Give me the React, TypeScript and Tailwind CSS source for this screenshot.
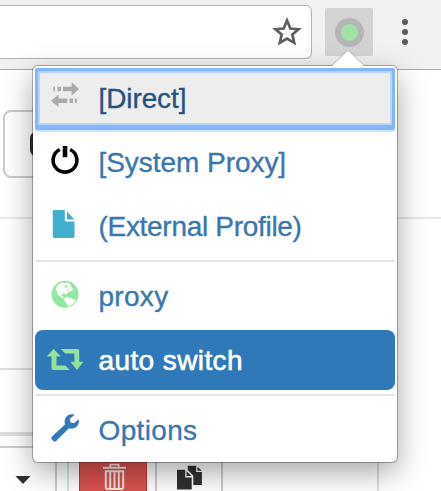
import React from "react";

const icon = "block h-7 w-7 shrink-0 overflow-visible";

function TransferIcon() {
  return (
    <svg className={`${icon} -translate-y-1`} viewBox="0 0 28 28" fill="#aaaaaa">
      <path d="M12 6.7h8.7V2.3L28 9l-7.3 6.4v-4.1H12zM6.5 6.7H10v4.6H6.5zM2.3 6.7H4v4.6H2.3z" />
      <path d="M16.3 18.4H7.5v-4L0 20.7 7.5 27v-4h8.8zM18.5 18.4H22V23h-3.5zM23.9 18.4h1.9V23h-1.9z" />
    </svg>
  );
}

function PowerIcon() {
  return (
    <svg className={`${icon} -translate-y-0.5`} viewBox="0 0 28 28" fill="none" stroke="#000">
      <path d="M8.8 3.5a11.9 11.9 0 1 0 10.4 0" strokeWidth="3.6" />
      <path d="M14 0v11.2" strokeWidth="4.6" />
    </svg>
  );
}

function FileIcon() {
  return (
    <svg className={`${icon} -translate-y-0.5`} viewBox="0 0 28 28" fill="#41afcd">
      <path d="M3.2 0h10.6v9.8q0 1.6 1.6 1.6h8.1v15.2q0 1.4-1.4 1.4H3.2q-1.4 0-1.4-1.4V1.4Q1.8 0 3.2 0z" />
      <path d="M16 1.4l7.4 8H16z" />
    </svg>
  );
}

function GlobeIcon() {
  return (
    <svg className={`${icon} -translate-y-0.5`} viewBox="0 0 28 28">
      <circle cx="14" cy="14.3" r="13.5" fill="#94e7a0" />
      <path
        fill="#fff"
        d="M6.4 5.2l2.9-2 2.4-.7 2.5.7 1.4-.9 2.9.6.6 1.6 1.6 1.2-.3 2 1.4 1.1-.6 2.1-2.6.5-2.2 1.1-.3 1.6-1.7.4-1.2-1.2-2.1.9-.6 1.6 1.2 1 1.2.3.2 1.4-1.5-.2-2-1.7-2-.9-1.4-2.2-.4-2.8-.9-1.4.6-2.2z"
      />
      <path fill="#fff" d="M13.5 18.1l2.4-1 2.2.7 2.3.2 2.1 1.4 2.2.3-.8 2-1.9 2.2-2.6 1.7-2.6 1.2-.5-2.6-1.9-1.9-1.2-2.2z" />
      <path fill="#94e7a0" d="M13.3 5.9l2-.9 1.4 1.3-.8 1.4-1.8-.5zM16 9.1l1.8-.3.3 1.1-1.6.4z" />
    </svg>
  );
}

function RetweetIcon() {
  return (
    <svg className={icon} viewBox="0 0 28 28" fill="#94e39d">
      <path d="M2.6 2.9l7.1 7.7H5.5v9h8.7l4.6 4.3H2.4q-1.9 0-1.9-1.9V10.6h-4.8z" />
      <path d="M9.9 2.9h16.4q1.9 0 1.9 1.9v11h4.1L26 23.9l-6.6-8.1h4V7.6h-9z" />
    </svg>
  );
}

function WrenchIcon() {
  return (
    <svg className={`${icon} -translate-y-0.5`} viewBox="0 0 28 28" fill="#307ab8">
      <path d="M23.6.8c-2.8-1-6-.5-8.1 1.7-2 2.1-2.5 5.1-1.3 7.8L.8 22.8q-1.3 1.3 0 2.6l1.7 1.7q1.3 1.2 2.6 0L17.9 14.2c2.6 1 5.7.4 7.7-1.6 2-1.9 2.8-4.7 2.1-7.3l-4.8 4-3.3-.8-.9-3.5z" />
    </svg>
  );
}

function StarIcon() {
  return (
    <svg className="block h-7 w-[30px] overflow-visible" viewBox="0 0 30 28" fill="none" stroke="#5e5e5e" strokeWidth="2.7">
      <path d="M15 2.6l3.3 7.9 8.3.7-6.3 5.4 1.9 8.2-7.2-4.3-7.2 4.3 1.9-8.2-6.3-5.4 8.3-.7z" />
    </svg>
  );
}

function TrashIcon() {
  return (
    <svg className="block h-7 w-[23px]" viewBox="0 0 23 28" fill="none" stroke="#f4e5e4">
      <path d="M0 4.8h23" strokeWidth="1.9" />
      <path d="M7.3 4.2V1.7h8.4v2.5" strokeWidth="1.7" />
      <path d="M2.8 8.3h17.4v15.8q0 2-2 2H4.8q-2 0-2-2z" strokeWidth="2" />
      <path d="M7.2 9v17M11.5 9v17M15.8 9v17" strokeWidth="1.9" />
    </svg>
  );
}

function DuplicateIcon() {
  return (
    <svg className="block h-[26px] w-[26px]" viewBox="0 0 26 26" fill="#303030">
      <path d="M0 4.8h8.2v7.6h6.5V24.5H0zM9.6 6.2l4.9 4.9H9.6zM10.7.7h8.5v6.2h5.7v13h-8.6v-9.3L10.7 5zM20.5 1.7l4.3 4.1h-4.3z" />
    </svg>
  );
}

interface ItemProps {
  label: string;
  children: React.ReactNode;
  tracking?: string;
  state?: "normal" | "focused" | "active";
}

function Item({ label, children, tracking = "", state = "normal" }: ItemProps) {
  const look =
    state === "active"
      ? "rounded-lg bg-[#2f79b9] text-white [-webkit-text-stroke:0.6px_white]"
      : state === "focused"
        ? "bg-[#ededed] text-[#28527c] [-webkit-text-stroke:0.35px_#28527c]"
        : "text-[#3a76b0] [-webkit-text-stroke:0.35px_#3a76b0]";
  return (
    <li className={`relative flex h-[60px] items-center gap-[19.5px] pl-4 text-[28px] leading-none ${look}`}>
      {children}
      <span className={`whitespace-nowrap pt-px ${tracking}`}>{label}</span>
      {state === "focused" && (
        <span className="absolute -bottom-0.5 left-0 right-0 top-0 rounded-xs border-3 border-b-5 border-[#82b7fa] shadow-[inset_0_0_0_2px_#b8d5f8,0_2px_0_#cfe4fc]" />
      )}
    </li>
  );
}

function Divider() {
  return <li className="h-0.5 shrink-0 bg-[#e4e4e4]" />;
}

function Toolbar() {
  return (
    <header className="flex h-[70px] items-start border-b border-[#a9a9a9] bg-[#f1f1f1]">
      <div className="mt-[5px] flex h-[54px] w-[312px] items-center justify-end rounded-r-md border border-l-0 border-[#b2b2b2] bg-white pr-[9px]">
        <StarIcon />
      </div>
      <div className="ml-[13px] mt-2 flex h-12 w-12 items-center justify-center rounded-xs bg-[#d3d3d3]">
        <div className="h-[29px] w-[29px] rounded-full border-[6.5px] border-[#b5b5b5] bg-[#a2e1a5]" />
      </div>
      <div className="ml-[29px] mt-[19px] flex flex-col gap-1">
        <i className="h-1.5 w-1.5 rounded-full bg-[#5c5c5c]" />
        <i className="h-1.5 w-1.5 rounded-full bg-[#5c5c5c]" />
        <i className="h-1.5 w-1.5 rounded-full bg-[#5c5c5c]" />
      </div>
    </header>
  );
}

function Page() {
  return (
    <main className="flex h-[421px] flex-col">
      <div className="h-[149px] shrink-0 border-b-2 border-[#e8e8e8] pl-[3px] pt-10">
        <div className="flex h-[68px] w-40 items-center rounded-lg border-2 border-[#cccccc] pl-[25px]">
          <div className="h-6 w-6 rounded-md bg-[#303030]" />
        </div>
      </div>
      <div className="flex grow">
        <div className="flex w-[379px] flex-col border-r-2 border-[#dddddd]">
          <div className="h-[151px] shrink-0 border-b-2 border-[#dddddd]" />
          <div className="h-[62px] shrink-0" />
          <div className="h-1 shrink-0 bg-[#dddddd]" />
          <div className="h-[10px] shrink-0" />
          <div className="flex grow">
            <div className="flex w-[57px] items-end justify-center rounded-tr-xs border-r-2 border-t-2 border-[#cccccc] pb-[7px] pr-[9px]">
              <svg className="block h-2 w-4" viewBox="0 0 16 8" fill="#303030">
                <path d="M.4 0h15.2L8 8z" />
              </svg>
            </div>
            <div className="ml-[10px] flex grow border-l-2 border-[#dddddd]">
              <div className="ml-2.5 flex w-[68px] items-end justify-center border-x border-[#c9302c] bg-[#d9534f] pl-0.5">
                <TrashIcon />
              </div>
              <div className="ml-2 flex w-[68px] items-end justify-center border-x-2 border-[#cccccc] pl-0.5">
                <DuplicateIcon />
              </div>
            </div>
          </div>
        </div>
      </div>
    </main>
  );
}

export default function App() {
  return (
    <div className="relative h-[491px] w-[441px] overflow-hidden bg-white font-['Liberation_Sans',Arial,sans-serif]">
      <Toolbar />
      <Page />
      <div className="absolute left-[33px] top-[66px] w-[364px] rounded-[5px] bg-white p-0.5 shadow-[0_0_0_1px_rgba(0,0,0,0.28),0_10px_30px_rgba(0,0,0,0.36)]">
        <svg className="absolute -top-4 left-[299px] block h-[17px] w-8" viewBox="0 0 32 17">
          <path d="M0 16.5 16 .7 32 16.5v.5H0z" fill="#fff" />
          <path d="M0 15.5 14.7 1.2q1.3-1.2 2.6 0L32 15.5" fill="none" stroke="#b5b5b5" strokeWidth=".8" />
        </svg>
        <ul className="flex flex-col gap-1">
          <Item label="[Direct]" state="focused" tracking="tracking-[-0.1px]">
            <TransferIcon />
          </Item>
          <Item label="[System Proxy]" tracking="tracking-[-0.05px]">
            <PowerIcon />
          </Item>
          <Item label="(External Profile)" tracking="tracking-[-0.3px]">
            <FileIcon />
          </Item>
          <Divider />
          <Item label="proxy" tracking="tracking-[0.3px]">
            <GlobeIcon />
          </Item>
          <Item label="auto switch" state="active" tracking="tracking-[0.4px]">
            <RetweetIcon />
          </Item>
          <Divider />
          <Item label="Options" tracking="tracking-[0.35px]">
            <WrenchIcon />
          </Item>
        </ul>
      </div>
    </div>
  );
}
